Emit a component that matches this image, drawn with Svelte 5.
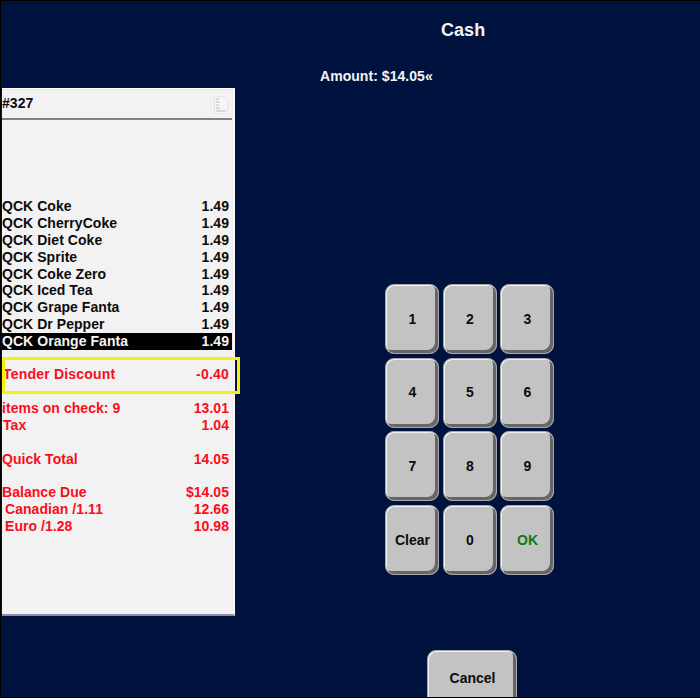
<script>
  const items = ['QCK Coke','QCK CherryCoke','QCK Diet Coke','QCK Sprite','QCK Coke Zero','QCK Iced Tea','QCK Grape Fanta','QCK Dr Pepper'];
  const keys = ['1','2','3','4','5','6','7','8','9','Clear','0','OK'];
</script>

<div class="screen">
  <section class="receipt">
    <header class="check">
      <span>#327</span>
      <svg class="doc" width="14" height="18" viewBox="0 0 14 18" aria-hidden="true">
        <path d="M.5.5H9.5L13.5 4.500V17.500H.5Z" fill="#f6f6f6" stroke="#e4e4e4"/>
        <path d="M2 3H5M2 6H6M2 9H5M2 12H6M2 15H12" stroke="#bcbcbc" stroke-width="1"/>
      </svg>
    </header>
    <div class="items">
      {#each items as name}
        <div class="row"><span>{name}</span><span>1.49</span></div>
      {/each}
      <div class="row selected"><span>QCK Orange Fanta</span><span>1.49</span></div>
    </div>
    <div class="discount row red"><span>Tender Discount</span><span>-0.40</span></div>
    <div class="totals red">
      <div class="row"><span>items on check: 9</span><span>13.01</span></div>
      <div class="row tax"><span>Tax</span><span>1.04</span></div>
      <div class="row gap"><span class="tax-text">Quick Total</span><span>14.05</span></div>
      <div class="row gap"><span class="tax-text">Balance Due</span><span>$14.05</span></div>
      <div class="row fx"><span>Canadian /1.11</span><span>12.66</span></div>
      <div class="row fx"><span>Euro /1.28</span><span>10.98</span></div>
    </div>
  </section>

  <main class="side">
    <h1>Cash</h1>
    <p class="amount">Amount: $14.05«</p>
    <div class="keypad">
      {#each keys as key}
        <button class="key" class:ok={key === 'OK'}>{key}</button>
      {/each}
    </div>
    <button class="key cancel">Cancel</button>
  </main>
</div>

<style>
  :global(body) { margin: 0; }
  .screen {
    box-sizing: border-box;
    width: 700px;
    height: 698px;
    display: flex;
    overflow: hidden;
    background: #00133f;
    border: solid #000;
    border-width: 1px 0 1px 1px;
    font: bold 14px/16.8px "Liberation Sans", Arial, sans-serif;
    letter-spacing: 0.05px;
    color: #0c0c0c;
  }
  .receipt {
    box-sizing: border-box;
    flex: none;
    width: 233px;
    height: 528px;
    margin-top: 87px;
    margin-left: 1px;
    padding-right: 2px;
    background: #f2f2f2;
    border: solid #fff;
    border-width: 1px 1px 2px 0;
    border-bottom-color: #8c8ca6;
    box-shadow: inset 0 1px 0 #e4e4e4;
  }
  .check {
    display: flex;
    justify-content: space-between;
    align-items: center;
    height: 29px;
    padding-right: 4px;
    border-bottom: 2px solid #808080;
  }
  .doc { margin-top: 2px; }
  .items { margin-top: 78.400px; }
  .row {
    display: flex;
    justify-content: space-between;
    height: 16.8px;
    padding-right: 3px;
    white-space: nowrap;
  }
  .selected { background: #000; color: #f4f4f4; }
  .red { color: #fb0d1b; }
  .discount {
    box-sizing: border-box;
    height: 37px;
    margin: 7.600px -8px 0 0;
    padding: 9px 11px 0 1px;
    outline: 3px solid #f8ee14;
    outline-offset: -3px;
    align-items: flex-start;
    letter-spacing: 0.2px;
  }
  .totals { margin-top: 6px; }
  .gap { margin-top: 16.800px; }
  .tax-text { padding-left: 0; }
  .tax span:first-child { padding-left: 1px; }
  .fx span:first-child { padding-left: 3px; }
  .side {
    flex: 1;
    display: flex;
    flex-direction: column;
    align-items: flex-start;
    min-width: 0;
  }
  h1 {
    margin: 19px 0 0 206px;
    font-size: 18px;
    line-height: 21px;
    color: #f4f4f4;
  }
  .amount {
    margin: 27px 0 0 85px;
    line-height: 17px;
    color: #f4f4f4;
  }
  .keypad {
    display: grid;
    grid-template-columns: repeat(3, 54px);
    grid-auto-rows: 70px;
    gap: 3.670px 3.500px;
    margin: 199px 0 0 150px;
  }
  .key {
    box-sizing: border-box;
    padding: 0 0 0 1px;
    border: 1px solid #a8a8a8;
    border-radius: 9px;
    background: #c3c3c3;
    box-shadow: inset 1px 1px 0 #f2f2f2, inset -3px -3px 0 #666;
    font: inherit;
    color: #0c0c0c;
  }
  .ok { color: #0f7a10; }
  .cancel {
    flex: none;
    width: 90px;
    height: 60px;
    margin: 75px 0 0 192px;
    padding-bottom: 4px;
    border-radius: 9px 9px 0 0;
  }
</style>
